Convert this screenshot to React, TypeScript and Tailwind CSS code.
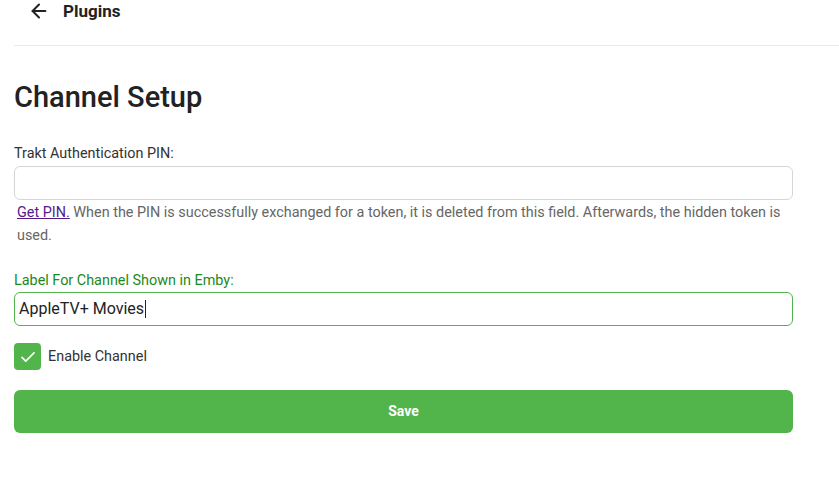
import { useState } from "react";

function App() {
  const [enabled, setEnabled] = useState(true);

  return (
    <div className="min-h-[487px] bg-white font-['Roboto',sans-serif] text-[#222]">
      {/* header */}
      <div className="ml-[14px] flex h-[46px] items-start border-b border-[#e8e8e8]">
        <div className="flex items-center gap-[13px] pl-[14px]">
          <svg width="22" height="22" viewBox="0 0 24 24" fill="none" stroke="#222" strokeWidth="2.2" strokeLinecap="round" strokeLinejoin="round">
            <path d="M19 12H5" />
            <path d="M12 19l-7-7 7-7" />
          </svg>
          <span className="text-[17px] font-bold leading-[22px]">Plugins</span>
        </div>
      </div>

      <div className="w-[779px] pl-[14px] box-content">
        <h1 className="mt-[34px] text-[29px] font-medium leading-[34px] text-[#222]">Channel Setup</h1>

        {/* trakt pin */}
        <label className="mt-[31px] block text-[14.4px] leading-[17px] text-[#333]">Trakt Authentication PIN:</label>
        <input
          className="mt-[4px] block h-[34px] w-full rounded-[6px] border border-[#d6d6d6] px-[5px] text-[16px] outline-none"
          defaultValue=""
        />
        <p className="mt-[1px] pl-[3px] text-[14.4px] leading-[23px] text-[#666]">
          <a href="#" className="text-[#551a8b] underline">Get PIN.</a>{" "}
          When the PIN is successfully exchanged for a token, it is deleted from this field. Afterwards, the hidden token is used.
        </p>

        {/* label */}
        <label className="mt-[25px] block text-[14.4px] leading-[17px] text-[#1b8a1b]">Label For Channel Shown in Emby:</label>
        <div className="mt-[3px] flex h-[34px] w-full items-center rounded-[6px] border border-[#52b54b] px-[4px] text-[16px] text-[#222]">
          AppleTV+ Movies<span className="ml-[1px] inline-block h-[18px] w-[1px] bg-[#222]" />
        </div>

        {/* checkbox */}
        <button
          type="button"
          onClick={() => setEnabled(!enabled)}
          className="mt-[17px] flex items-center gap-[7px]"
        >
          <span className={"flex h-[27px] w-[27px] items-center justify-center rounded-[4px] " + (enabled ? "bg-[#52b54b]" : "border-2 border-[#999]")}>
            {enabled && (
              <svg width="18" height="18" viewBox="0 0 24 24" fill="none" stroke="white" strokeWidth="2.2" strokeLinecap="round" strokeLinejoin="round">
                <path d="M4 12.5l5 5L20 6.5" />
              </svg>
            )}
          </span>
          <span className="text-[14.4px] text-[#333]">Enable Channel</span>
        </button>

        <button
          type="button"
          className="mt-[20px] flex h-[43px] w-full items-center justify-center rounded-[6px] bg-[#52b54b] text-[14px] font-bold text-white"
        >
          Save
        </button>
      </div>
    </div>
  );
}

export default App;
